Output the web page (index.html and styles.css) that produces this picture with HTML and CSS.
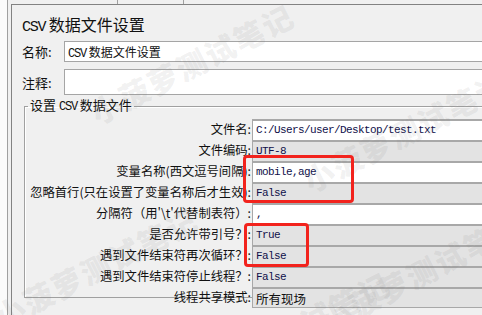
FILE: index.html
```html
<!DOCTYPE html>
<html lang="zh">
<head>
    <meta charset="UTF-8">
    <meta name="viewport" content="width=device-width, initial-scale=1.0">
    <title>CSV 数据文件设置</title>
    <link rel="stylesheet" href="styles.css">
</head>
<body>
    <div class="frame">
        <div class="side"></div>
        <div class="main">
            <div class="ticks"><span class="tick"></span></div>
            <div class="panel">
                <div class="title"><span class="mono">CSV</span> 数据文件设置</div>
                <div class="row">
                    <div class="label">名称:</div>
                    <div class="input"><span class="mono">CSV</span> 数据文件设置</div>
                </div>
                <div class="row comment">
                    <div class="label">注释:</div>
                    <div class="input"></div>
                </div>
                <fieldset class="group">
                    <legend>设置 <span class="mono">CSV</span> 数据文件</legend>
                    <div class="grid">
                        <div class="key"><span>文件名:</span></div>
                        <div class="val text mono">C:/Users/user/Desktop/test.txt</div>
                        <div class="key"><span>文件编码:</span></div>
                        <div class="val combo mono">UTF-8</div>
                        <div class="key"><span>变量名称(西文逗号间隔):</span></div>
                        <div class="val text mono">mobile,age</div>
                        <div class="key"><span>忽略首行(只在设置了变量名称后才生效):</span></div>
                        <div class="val combo mono">False</div>
                        <div class="key"><span>分隔符（用'\t'代替制表符）:</span></div>
                        <div class="val text mono">,</div>
                        <div class="key"><span>是否允许带引号？:</span></div>
                        <div class="val combo mono">True</div>
                        <div class="key"><span>遇到文件结束符再次循环？:</span></div>
                        <div class="val combo mono">False</div>
                        <div class="key"><span>遇到文件结束符停止线程？:</span></div>
                        <div class="val combo mono">False</div>
                        <div class="key"><span>线程共享模式:</span></div>
                        <div class="val combo last">所有现场</div>
                    </div>
                </fieldset>
            </div>
        </div>

        <div class="mark mark-1">小菠萝测试笔记</div>
        <div class="mark mark-2">小菠萝测试笔记</div>
        <div class="mark mark-3">小菠萝测试笔记</div>
        <div class="mark mark-4">小菠萝测试笔记</div>
        <div class="mark mark-5">小菠萝测试笔记</div>

        <div class="highlight box-1"></div>
        <div class="highlight box-2"></div>
    </div>
</body>
</html>
```

FILE: styles.css
```css
body {
    margin: 0;
    background-color: #f0f0f0;
    font-family: "Noto Sans CJK SC", "Noto Sans", sans-serif;
    color: #111;
    overflow: hidden;
}
.frame {
    position: relative;
    display: flex;
    width: 482px;
    height: 315px;
    overflow: hidden;
}
.side {
    width: 7px;
    flex: none;
    background-color: #fbfbfb;
    border-right: 1px solid #a0a0a0;
    margin-right: 3px;
}
.main {
    flex: none;
    width: 620px;
    display: flex;
    flex-direction: column;
}
.ticks {
    height: 4px;
    padding-left: 106px;
}
.tick {
    display: block;
    width: 65px;
    height: 4px;
    border-left: 1px solid #a0a0a0;
    border-right: 1px solid #a0a0a0;
}
.panel {
    flex: 1;
    border-top: 1px solid #828282;
    border-left: 1px solid #828282;
    padding-left: 10px;
}
.mono {
    font-family: "Liberation Mono", monospace;
}
.title {
    font-size: 16px;
    line-height: 20px;
    padding-top: 9px;
    height: 27px;
}
.title .mono {
    font-size: 15px;
    letter-spacing: -1.3px;
}
.row {
    display: flex;
    align-items: stretch;
    height: 21px;
    margin-bottom: 7px;
}
.row.comment {
    height: 26px;
    margin-bottom: 0;
}
.label {
    width: 42px;
    font-size: 13px;
    display: flex;
    align-items: center;
}
.input {
    flex: 1;
    background-color: #fff;
    border-top: 1px solid #a5a5a5;
    border-bottom: 1px solid #a5a5a5;
    border-left: 1px solid #a5a5a5;
    font-size: 12px;
    line-height: 19px;
    padding-left: 3px;
}
.input .mono {
    font-size: 12px;
    letter-spacing: -1.2px;
}
.group {
    margin: 3px 0 0 2px;
    padding: 2px 0 0 0;
    height: 196px;
    border: 1px solid #a0a0a0;
    box-shadow: inset 1px 1px 0 #fff;
}
.group legend {
    font-size: 13px;
    padding: 0 2px;
    margin-left: 3px;
    line-height: 14px;
}
.group legend .mono {
    font-size: 12px;
    letter-spacing: -1.2px;
}
.grid {
    display: grid;
    grid-template-columns: 227px 1fr;
    grid-auto-rows: 21px;
    margin-top: 3px;
}
.key {
    display: flex;
    justify-content: flex-end;
    font-size: 12.3px;
    padding-right: 1px;
    line-height: 21px;
    white-space: nowrap;
}
.val {
    border-top: 2px solid #a8a8a8;
    border-left: 1px solid #a8a8a8;
    padding-left: 3px;
    line-height: 19px;
    font-size: 11px;
    letter-spacing: -0.6px;
    color: #10104a;
}
.val.text {
    background-color: #fff;
}
.val.combo {
    background-color: #e3e3e3;
}
.val.last {
    font-size: 12.5px;
    letter-spacing: 0;
    color: #111;
    border-bottom: 1px solid #a8a8a8;
}
.mark {
    position: absolute;
    font-size: 30px;
    font-weight: 900;
    color: rgba(120, 120, 120, 0.11);
    white-space: nowrap;
    transform: rotate(-27deg);
    transform-origin: left center;
    letter-spacing: 2px;
    pointer-events: none;
}
.mark-1 { left: 92px; top: 92px; }
.mark-2 { left: 305px; top: 160px; }
.mark-3 { left: -4px; top: 296px; }
.mark-4 { left: 322px; top: 300px; }
.mark-5 { left: 188px; top: 360px; }
.highlight {
    position: absolute;
    border: 3px solid #f2231d;
    border-radius: 4px;
}
.box-1 {
    left: 243px;
    top: 155px;
    width: 105px;
    height: 42px;
}
.box-2 {
    left: 244px;
    top: 223px;
    width: 59px;
    height: 38px;
}
```
